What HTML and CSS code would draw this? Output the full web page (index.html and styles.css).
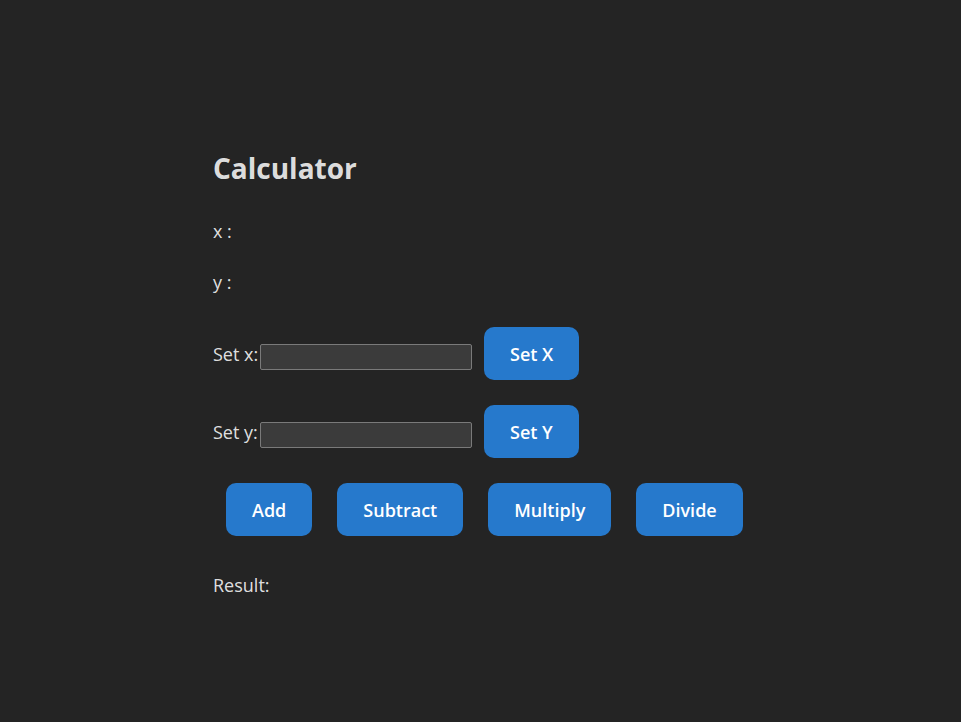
FILE: index.html
```html
<!DOCTYPE html>
<html lang="en">
<head>
<meta charset="utf-8">
<title>Calculator</title>
<link rel="stylesheet" href="styles.css">
</head>
<body>
<main class="calc">
  <h1 class="title">Calculator</h1>
  <div class="line line-x">x :</div>
  <div class="line line-y">y :</div>
  <div class="set-row">
    <label class="set-label" for="sx">Set x:</label><input id="sx" class="set-input" type="text">
    <button class="btn btn-set">Set X</button>
  </div>
  <div class="set-row">
    <label class="set-label" for="sy">Set y:</label><input id="sy" class="set-input" type="text">
    <button class="btn btn-set">Set Y</button>
  </div>
  <div class="ops">
    <button class="btn btn-op">Add</button>
    <button class="btn btn-op">Subtract</button>
    <button class="btn btn-op">Multiply</button>
    <button class="btn btn-op">Divide</button>
  </div>
  <div class="line result">Result:</div>
</main>
</body>
</html>
```

FILE: styles.css
```css
html, body {
  margin: 0;
  padding: 0;
  background: #242424;
}
body {
  font-family: "Open Sans", "Noto Sans", sans-serif;
  font-size: 18px;
  color: rgba(255, 255, 255, 0.87);
  height: 722px;
}
.calc {
  width: 535px;
  margin: 0 auto;
  padding-top: 148px;
  display: flex;
  flex-direction: column;
  align-items: flex-start;
}
.title {
  margin: 0;
  font-size: 28px;
  font-weight: 700;
  line-height: 40px;
}
.line {
  line-height: 30px;
}
.line-x { margin-top: 28px; }
.line-y { margin-top: 21px; }
.set-row {
  display: flex;
  align-items: center;
  height: 53px;
}
.set-row + .set-row { margin-top: 25px; }
.line-y + .set-row { margin-top: 30px; }
.set-label {
  line-height: 30px;
  width: 47px;
  white-space: nowrap;
}
.set-input {
  box-sizing: border-box;
  width: 212px;
  height: 26px;
  margin: 6px 0 0;
  padding: 0 4px;
  background: #3b3b3b;
  border: 1px solid #7a7a7a;
  border-radius: 2px;
  color: #fff;
  font: inherit;
}
.btn {
  height: 53px;
  padding: 0 26px;
  border: none;
  border-radius: 10px;
  background: #2679cc;
  color: #ffffff;
  font-family: "Open Sans", "Noto Sans", sans-serif;
  font-size: 18px;
  font-weight: 600;
  cursor: pointer;
}
.btn-set {
  margin-left: 12px;
}
.ops {
  display: flex;
  gap: 25px;
  margin-top: 25px;
  padding-left: 13px;
}
.result {
  margin-top: 34px;
}
```
